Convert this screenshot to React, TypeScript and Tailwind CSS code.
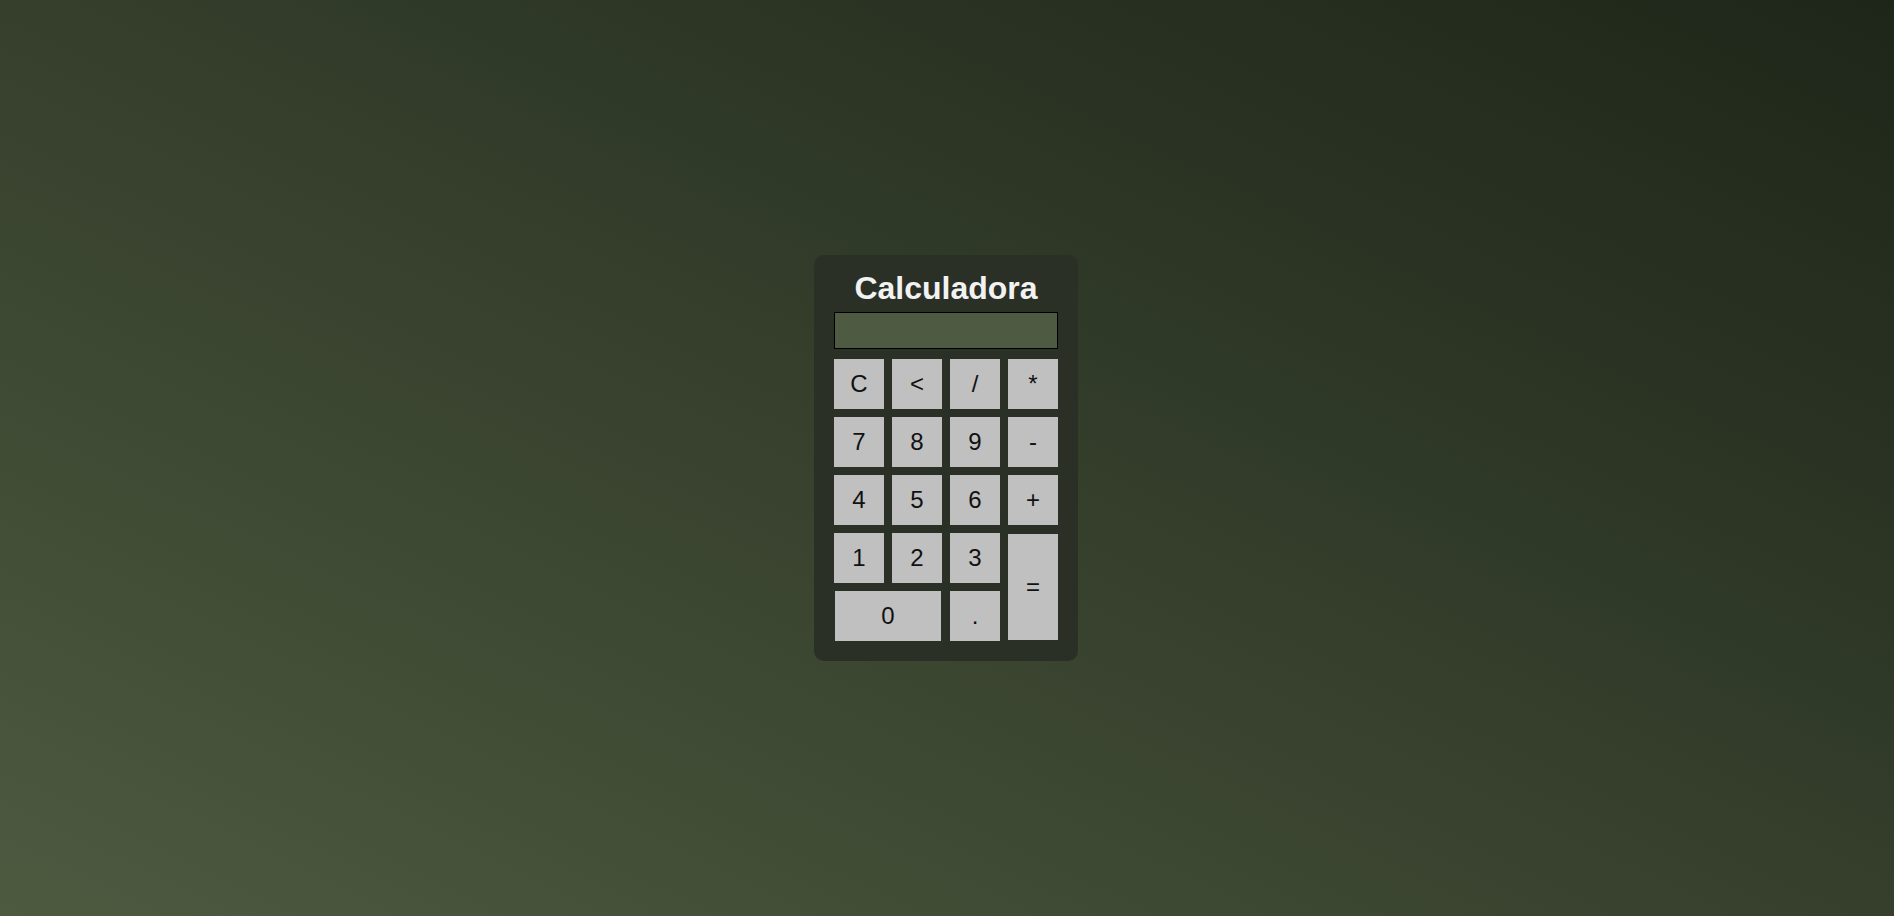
import React, { useState } from 'react';

const keys: { label: string; cls?: string }[] = [
  { label: 'C' },
  { label: '<' },
  { label: '/' },
  { label: '*' },
  { label: '7' },
  { label: '8' },
  { label: '9' },
  { label: '-' },
  { label: '4' },
  { label: '5' },
  { label: '6' },
  { label: '+' },
  { label: '1' },
  { label: '2' },
  { label: '3' },
  { label: '=', cls: 'row-span-2 my-px' },
  { label: '0', cls: 'col-span-2 mx-px' },
  { label: '.' },
];

const App: React.FC = () => {
  const [display, setDisplay] = useState('');

  const press = (k: string) => {
    if (k === 'C') return setDisplay('');
    if (k === '<') return setDisplay((d) => d.slice(0, -1));
    if (k === '=') {
      try {
        // eslint-disable-next-line no-new-func
        const r = Function(`return (${display})`)();
        setDisplay(String(r));
      } catch {
        setDisplay('Error');
      }
      return;
    }
    setDisplay((d) => d + k);
  };

  return (
    <div className="w-full h-screen overflow-hidden flex items-center justify-center bg-linear-to-tr from-[#4e5a40] to-[#1e2619] font-['Liberation_Sans',Arial,sans-serif]">
      <div className="w-[264px] mr-[2px] bg-[#2b3026] rounded-[10px] px-5 pt-[15px] pb-5 flex flex-col">
        <h1 className="text-[32px] leading-[37px] font-bold text-[#f2f2f2] text-center">Calculadora</h1>
        <input
          readOnly
          value={display}
          className="mt-[5px] w-[224px] h-[37px] bg-[#4f5a42] border border-black text-right px-2 text-[22px] text-white outline-none"
        />
        <div className="mt-[10px] grid grid-cols-[repeat(4,50px)] auto-rows-[50px] gap-2">
          {keys.map((k) => (
            <button
              key={k.label}
              onClick={() => press(k.label)}
              className={`bg-[#c0c0c0] text-[24px] text-[#111] flex items-center justify-center cursor-pointer hover:bg-[#d0d0d0] ${k.cls ?? ''}`}
            >
              {k.label}
            </button>
          ))}
        </div>
      </div>
    </div>
  );
};

export default App;
